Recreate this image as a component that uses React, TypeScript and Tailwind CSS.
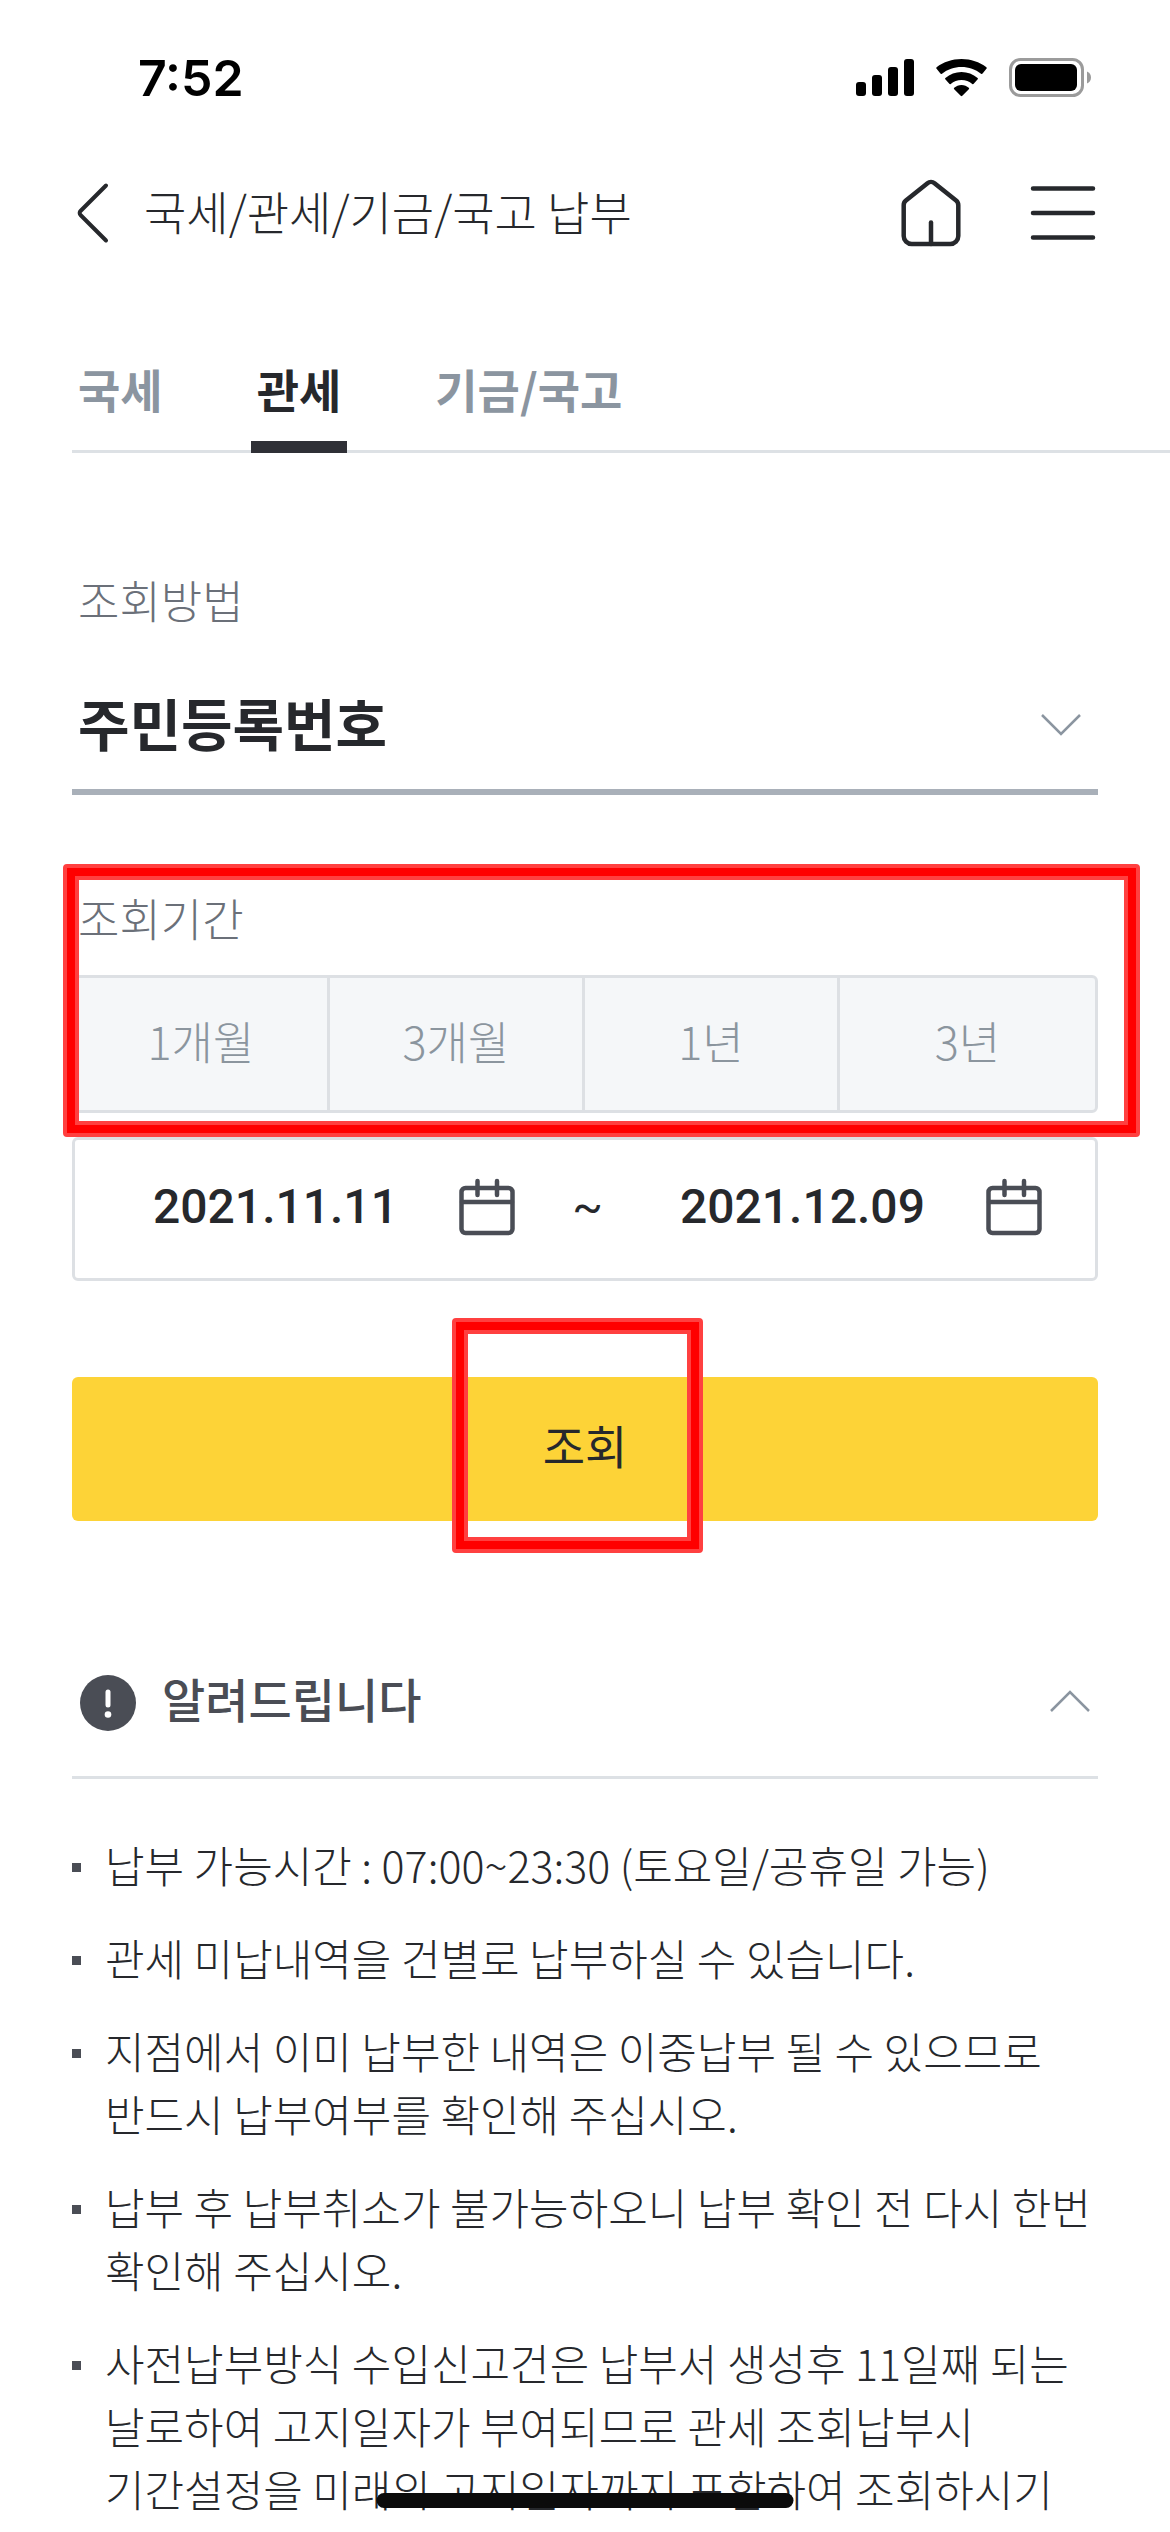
import { useState } from "react";

const TABS = ["국세", "관세", "기금/국고"];
const PERIODS = ["1개월", "3개월", "1년", "3년"];
const NOTICES = [
  "납부 가능시간 : 07:00~23:30 (토요일/공휴일 가능)",
  "관세 미납내역을 건별로 납부하실 수 있습니다.",
  "지점에서 이미 납부한 내역은 이중납부 될 수 있으므로 반드시 납부여부를 확인해 주십시오.",
  "납부 후 납부취소가 불가능하오니 납부 확인 전 다시 한번 확인해 주십시오.",
  "사전납부방식 수입신고건은 납부서 생성후 11일째 되는 날로하여 고지일자가 부여되므로 관세 조회납부시 기간설정을 미래의 고지일자까지 포함하여 조회하시기",
];

const StatusBar = () => (
  <div className="flex h-[156px] items-center justify-between pl-[138px] pr-[78px]">
    <span className="font-['Inter',sans-serif] text-[50px] leading-none font-semibold text-black">
      7:52
    </span>
    <div className="flex items-center">
      <svg width="59" height="38" viewBox="0 0 59 38" className="mr-[21px]" aria-hidden="true">
        <rect x="0" y="23" width="10" height="14" rx="3" />
        <rect x="16" y="16" width="10" height="21" rx="3" />
        <rect x="32" y="8" width="10" height="29" rx="3" />
        <rect x="48" y="0" width="10" height="37" rx="3" />
      </svg>
      <svg width="51" height="38" viewBox="0 0 51 38" className="mr-[22px]" aria-hidden="true">
        <path d="M.6 9.8a1.2 1.2 0 0 1 0-1.6C7.600 3 16 0 25.500 0S43.400 3 50.400 8.200a1.200 1.200 0 0 1 0 1.600l-3.800 4.700a1.200 1.200 0 0 1-1.600.2C39.500 10.300 32.800 8 25.500 8S11.500 10.300 6 14.700a1.200 1.200 0 0 1-1.600-.2z" />
        <path d="M9.400 18.900C14 15.200 19.500 13 25.500 13s11.500 2.200 16.100 5.900a1 1 0 0 1 .1 1.400l-4 4.500a1 1 0 0 1-1.400.1c-3-2.400-6.700-3.800-10.800-3.800s-7.800 1.400-10.800 3.800a1 1 0 0 1-1.400-.1l-4-4.500a1 1 0 0 1 .1-1.400z" />
        <path d="M18.200 28.800c2-1.700 4.500-2.800 7.300-2.800s5.300 1.100 7.300 2.800a1 1 0 0 1 0 1.500l-6.500 6.500a1.200 1.200 0 0 1-1.600 0l-6.500-6.500a1 1 0 0 1 0-1.500z" />
      </svg>
      <svg width="83" height="40" viewBox="0 0 83 40" aria-hidden="true">
        <rect x="1.500" y="1.500" width="72" height="36" rx="10" fill="none" stroke="#9b9b9b" strokeWidth="3" />
        <rect x="6" y="6" width="62" height="27" rx="6" />
        <path d="M78 13.500c2.500 1 4 3.300 4 6s-1.500 5-4 6z" fill="#9b9b9b" />
      </svg>
    </div>
  </div>
);

const Header = () => (
  <header className="flex h-[114px] items-center justify-between pl-[76px] pr-[74px]">
    <div className="flex items-center gap-[34px]">
      <button type="button" aria-label="뒤로">
        <svg width="34" height="62" viewBox="0 0 34 62" fill="none" stroke="#26282c" strokeWidth="4" strokeLinecap="round" strokeLinejoin="round">
          <path d="M30 3.500 4.500 29a2.800 2.800 0 0 0 0 4L30 58.500" />
        </svg>
      </button>
      <h1 className="pb-1.5 text-[46px] leading-[60px] font-light text-[#26282c]">국세/관세/기금/국고 납부</h1>
    </div>
    <div className="flex items-center gap-[68px]">
      <button type="button" aria-label="홈">
        <svg width="62" height="68" viewBox="0 0 62 68" fill="none" stroke="#26282c" strokeWidth="4.500" strokeLinecap="round" strokeLinejoin="round">
          <path d="M27.500 4.200a5.500 5.500 0 0 1 7 0l21.600 17.300a6 6 0 0 1 2.200 4.700V57a8 8 0 0 1-8 8H11.700a8 8 0 0 1-8-8V26.200a6 6 0 0 1 2.200-4.700z" />
          <path d="M31 43.500V65" />
        </svg>
      </button>
      <button type="button" aria-label="전체메뉴">
        <svg width="66" height="56" viewBox="0 0 66 56" stroke="#26282c" strokeWidth="4.500" strokeLinecap="round">
          <path d="M3 3.500h60M3 28h60M3 52.500h60" />
        </svg>
      </button>
    </div>
  </header>
);

const Chevron = ({ up = false }: { up?: boolean }) => (
  <svg width="40" height="22" viewBox="0 0 40 22" fill="none" stroke="#8b95a0" strokeWidth="2.500" aria-hidden="true">
    <path d={up ? "M1 21 20 2l19 19" : "M1 1l19 19L39 1"} />
  </svg>
);

const CalendarIcon = () => (
  <svg width="56" height="58" viewBox="0 0 56 58" fill="none" stroke="#4a4d55" strokeWidth="4.500" strokeLinecap="round">
    <rect x="2.500" y="10" width="51" height="45" rx="4" />
    <path d="M3 24h50M18.500 3v14M38 3v14" />
  </svg>
);

// red marker frame drawn over the form
const Marker = ({ className }: { className: string }) => (
  <div className={`pointer-events-none absolute rounded-[4px] border-4 border-[#ff4040] ${className}`}>
    <div className="h-full w-full border-8 border-[#ff0000]">
      <div className="h-full w-full border-4 border-[#ff4040]"></div>
    </div>
  </div>
);

const DateField = ({ label, value }: { label: string; value: string }) => (
  <div className="flex items-center gap-[58px]">
    <input
      type="text"
      aria-label={label}
      defaultValue={value}
      className="w-[248px] bg-transparent font-['Roboto',sans-serif] text-[48px] leading-[60px] font-medium text-[#26282c] outline-none"
    />
    <button type="button" aria-label={`${label} 선택`}>
      <CalendarIcon />
    </button>
  </div>
);

export default function App() {
  const [tab, setTab] = useState("관세");
  const [open, setOpen] = useState(true);

  return (
    <div className="relative h-screen overflow-hidden bg-white font-['Noto_Sans_CJK_KR',sans-serif] text-[#26282c]">
      <StatusBar />
      <Header />

      <nav className="mt-[57px] ml-[72px] flex gap-[82px] border-b-[3px] border-[#dde1e5]">
        {TABS.map((name) => (
          <button
            key={name}
            type="button"
            onClick={() => setTab(name)}
            className={`-mb-[3px] h-[126px] border-b-[12px] px-1.5 pt-2 text-[46px] leading-[60px] font-bold ${
              name === tab ? "border-[#2f3036] text-[#26282c]" : "border-transparent text-[#8b95a0]"
            }`}
          >
            {name}
          </button>
        ))}
      </nav>

      <main className="px-[72px]">
        <section className="pt-[117px]">
          <label htmlFor="method" className="block px-1.5 text-[45px] leading-[60px] font-light text-[#6b7079]">
            조회방법
          </label>
          <div className="relative mt-[35px]">
            <select
              id="method"
              className="block h-[130px] w-full appearance-none border-b-[6px] border-[#a9b0b9] bg-transparent px-1.5 pb-2.5 text-[56px] font-bold outline-none"
            >
              <option>주민등록번호</option>
            </select>
            <span className="pointer-events-none absolute top-[49px] right-[17px]">
              <Chevron />
            </span>
          </div>
        </section>

        <section className="relative mt-[69px] pt-[24px] pb-[24px]">
          <h2 className="px-1.5 text-[45px] leading-[60px] font-light text-[#6b7079]">조회기간</h2>
          <div className="mt-[27px] grid h-[138px] grid-cols-4 divide-x-[3px] divide-[#dde0e4] rounded-[6px] border-[3px] border-[#dde0e4] bg-[#f5f7f9]">
            {PERIODS.map((period) => (
              <button key={period} type="button" className="pb-1.5 text-[45px] leading-[60px] font-light text-[#8b959e]">
                {period}
              </button>
            ))}
          </div>
          <Marker className="top-0 bottom-0 -left-[9px] -right-[42px]" />
        </section>

        <div className="flex h-[144px] items-center justify-between rounded-[6px] border-[3px] border-[#dde0e4] pr-[53px] pb-1 pl-[78px]">
          <DateField label="조회 시작일" value="2021.11.11" />
          <span className="pr-5 font-['Roboto',sans-serif] text-[45px] leading-[60px]">~</span>
          <DateField label="조회 종료일" value="2021.12.09" />
        </div>

        <div className="relative mt-24">
          <button type="button" className="block h-[144px] w-full rounded-[6px] bg-[#fdd337] pb-2.5 text-[46px] leading-[60px]">
            조회
          </button>
          <Marker className="-top-[59px] -bottom-[32px] left-[37%] w-[251px]" />
        </div>

        <section className="pt-[105px]">
          <button
            type="button"
            aria-expanded={open}
            onClick={() => setOpen(!open)}
            className="flex h-[153px] w-full items-center justify-between border-b-[3px] border-[#dde1e5] pr-[8px] pl-2"
          >
            <span className="flex items-center gap-[26px]">
              <svg width="56" height="56" viewBox="0 0 56 56" className="mt-1" aria-hidden="true">
                <circle cx="28" cy="28" r="28" fill="#4a4d55" />
                <path d="M28 17v13" stroke="#fff" strokeWidth="5" strokeLinecap="round" />
                <circle cx="28" cy="39.500" r="3.300" fill="#fff" />
              </svg>
              <span className="pb-1.5 text-[47px] leading-[60px] font-medium text-[#4a4d55]">알려드립니다</span>
            </span>
            <Chevron up />
          </button>
          {open && (
            <ul className="mt-[54px] space-y-[30px] text-[43px] leading-[63px] font-light break-keep">
              {NOTICES.map((notice) => (
                <li key={notice} className="flex gap-[24px]">
                  <span className="mt-[30px] size-[9px] shrink-0 bg-[#4a4d55]"></span>
                  <p>{notice}</p>
                </li>
              ))}
            </ul>
          )}
        </section>
      </main>

      <div className="fixed bottom-[24px] left-1/2 h-[15px] w-[417px] -translate-x-1/2 rounded-full bg-[#0b0b0b]"></div>
    </div>
  );
}
